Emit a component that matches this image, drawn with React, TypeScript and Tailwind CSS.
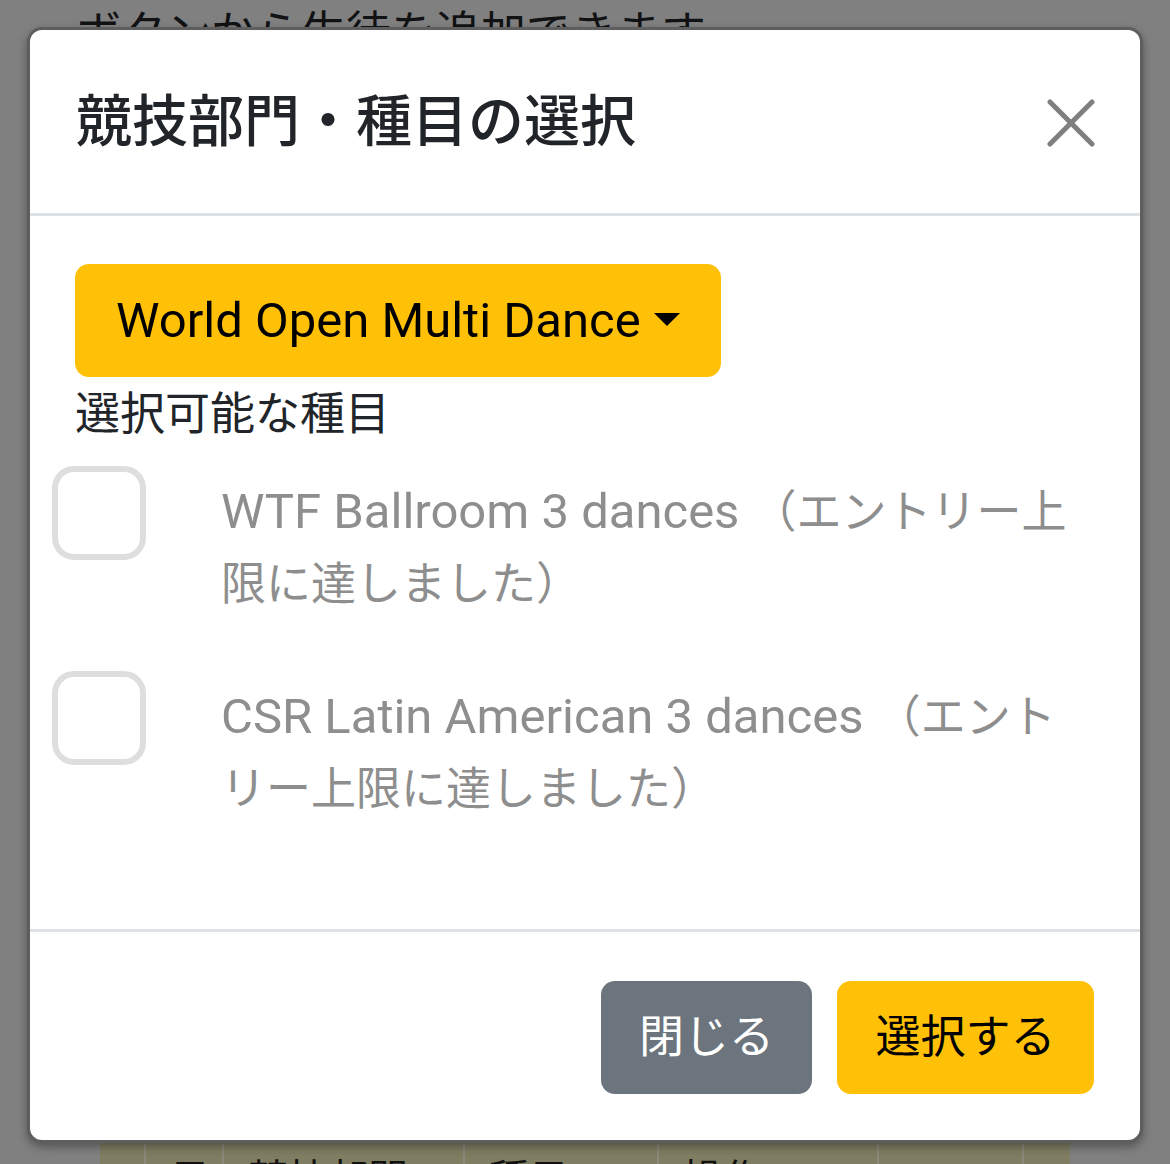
import React from "react";

const FONT = "font-['Roboto','Noto_Sans_CJK_JP',sans-serif]";

function Checkbox() {
  return (
    <div className="w-[94px] h-[94px] shrink-0 rounded-[22px] border-[6px] border-[#dedede] bg-white" />
  );
}

function Item({ latin, jp }: { latin: string; jp: string }) {
  return (
    <div className="flex items-start ml-[-23px]">
      <Checkbox />
      <div className="ml-[75px] mt-[10px] w-[860px] text-[45px] leading-[72px] text-[#8e8e8e]">
        <span className="text-[49px]">{latin} </span>
        {jp}
      </div>
    </div>
  );
}

export default function App() {
  return (
    <div className={`relative w-[1170px] h-[1164px] overflow-hidden bg-[#808080] ${FONT}`}>
      {/* background page */}
      <div className="pl-[76px] mt-[-2px] text-[45px] leading-[72px] text-[#111214] whitespace-nowrap">
        ボタンから生徒を追加できます
      </div>
      <div className="h-[1068px]" />
      <div className="ml-[100px] w-[970px] h-[120px] bg-[#7f7d62] flex text-[40px] leading-[72px] text-[#111] pt-[6px]">
        <div className="w-[46px] border-r-[2px] border-[#8a897a]" />
        <div className="w-[78px] border-r-[2px] border-[#8a897a] pl-[24px]">目</div>
        <div className="w-[241px] border-r-[2px] border-[#8a897a] pl-[24px]">競技部門</div>
        <div className="w-[194px] border-r-[2px] border-[#8a897a] pl-[24px]">種目</div>
        <div className="w-[220px] border-r-[2px] border-[#8a897a] pl-[24px]">操作</div>
        <div className="w-[145px] border-r-[2px] border-[#8a897a] pl-[60px]">い</div>
        <div className="flex-1" />
      </div>

      {/* modal */}
      <div className="absolute left-[27px] top-[27px] w-[1116px] h-[1116px] bg-white rounded-[15px] border-[3px] border-[#5e5e5e] shadow-[0_4px_10px_rgba(0,0,0,0.35)] flex flex-col overflow-hidden">
        <div className="h-[186px] shrink-0 border-b-[3px] border-[#dee2e6] flex items-center justify-between pl-[46px] pr-[45px]">
          <div className="text-[56px] leading-[72px] font-medium text-[#212529]">競技部門・種目の選択</div>
          <svg width="48" height="48" viewBox="0 0 48 48" className="mt-[2px]">
            <line x1="3" y1="3" x2="45" y2="45" stroke="#7f7f7f" strokeWidth="5" strokeLinecap="round" />
            <line x1="45" y1="3" x2="3" y2="45" stroke="#7f7f7f" strokeWidth="5" strokeLinecap="round" />
          </svg>
        </div>

        <div className="h-[713px] shrink-0 pt-[48px] pl-[45px] pr-[45px] flex flex-col">
          <div className="w-[646px] h-[113px] rounded-[14px] bg-[#ffc107] flex items-center pl-[41px] text-[49px] text-black">
            <span>World Open Multi Dance</span>
            <span className="ml-[13px] mt-[-2px] w-0 h-0 border-t-[13px] border-t-black border-x-[13.5px] border-x-transparent" />
          </div>
          <div className="mt-[2px] text-[45px] leading-[72px] text-[#212529]">選択可能な種目</div>
          <div className="mt-[15px] flex flex-col gap-[50px]">
            <Item latin="WTF Ballroom 3 dances" jp="（エントリー上限に達しました）" />
            <Item latin="CSR Latin American 3 dances" jp="（エントリー上限に達しました）" />
          </div>
        </div>

        <div className="flex-1 border-t-[3px] border-[#dee2e6] flex justify-end items-start gap-[25px] pt-[49px] pr-[46px]">
          <div className="w-[211px] h-[113px] rounded-[14px] bg-[#6c757d] text-white text-[45px] flex items-center justify-center">
            閉じる
          </div>
          <div className="w-[257px] h-[113px] rounded-[14px] bg-[#ffc107] text-black text-[45px] flex items-center justify-center">
            選択する
          </div>
        </div>
      </div>
    </div>
  );
}
